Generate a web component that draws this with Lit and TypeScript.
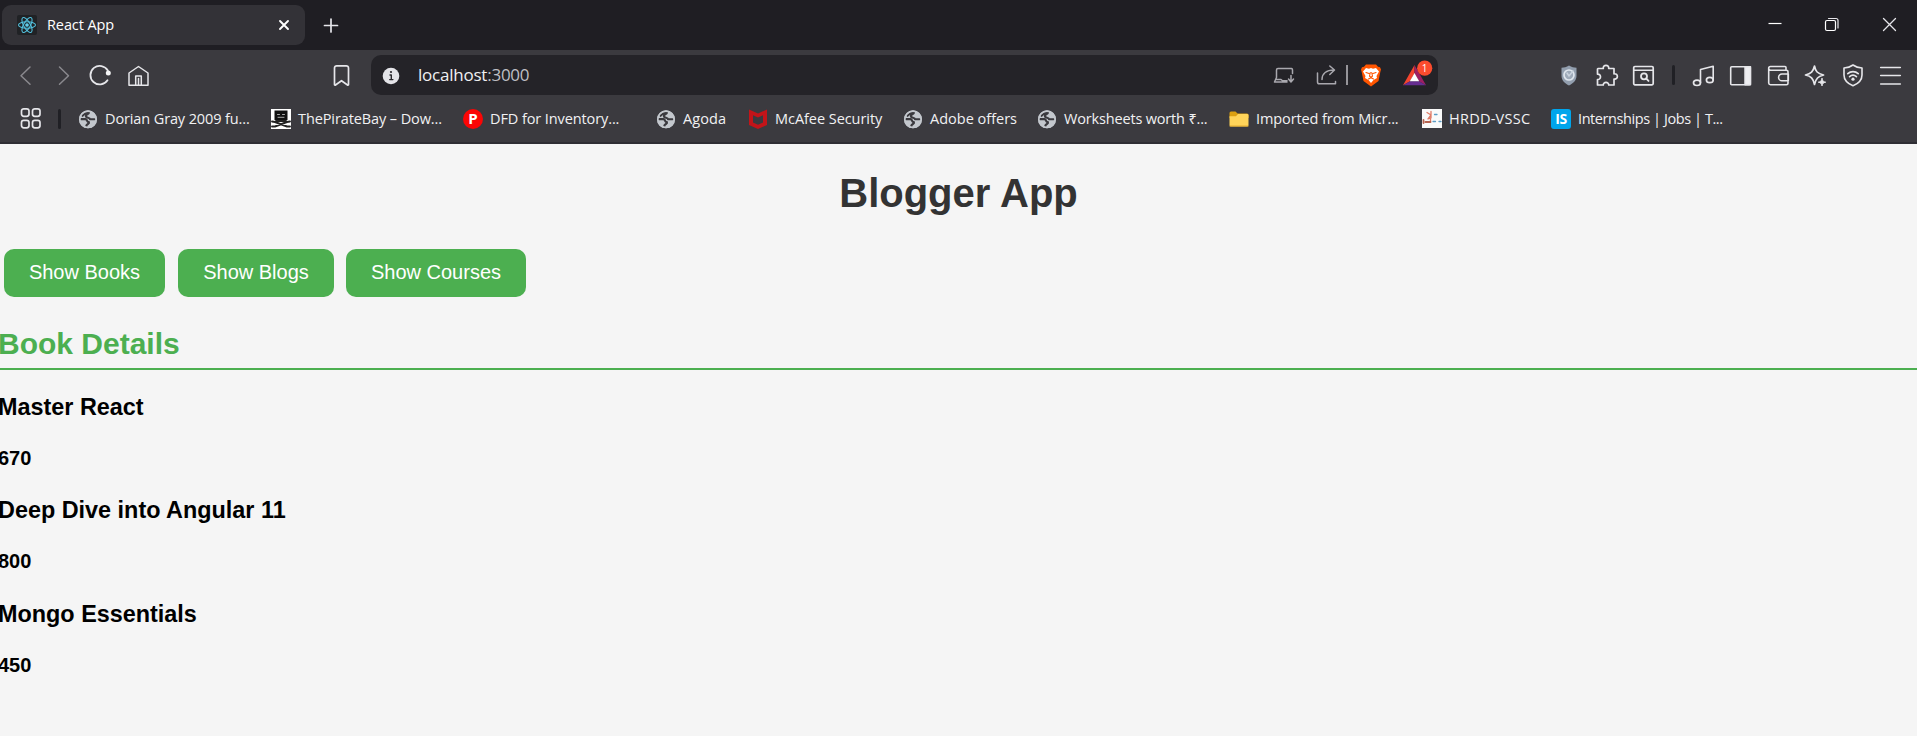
import { LitElement, html, css, svg } from "lit";
import { customElement, state } from "lit/decorators.js";

const icon = (body: unknown, size = 24) =>
  html`<svg class="icon" width=${size} height=${size} viewBox="0 0 ${size} ${size}">${body}</svg>`;

const globe = svg`
  <circle cx="10" cy="10.3" r="9" fill="#c3c7cd"/>
  <path d="M4.500 6.800C6.500 4.500 9 3.200 11 3.600c0 2-3.200 1.400-3.200 3.400 0 2.300 4.200 1 4.200 3.300h4.500" fill="none" stroke="#3b3a3f" stroke-width="2.100"/>
  <path d="M2 10.200h5.500c2 0 1 2.900 3.400 2.900 .8 2.300-2.400 1.300-2.600 4" fill="none" stroke="#3b3a3f" stroke-width="2.200"/>
  <circle cx="10" cy="10.3" r="8.200" fill="none" stroke="#c3c7cd" stroke-width="1.700"/>`;

const pirate = svg`
  <rect width="20" height="20" fill="#fff"/>
  <path d="M3.500 1.500h13v9.500h-13z" fill="#111"/>
  <path d="M6.500 5.500h2M11.500 5.500h2M7 8.300h6" stroke="#aaa" stroke-width="1"/>
  <path d="M1 12.500l3 .5 12 4.500h3M19 12.500l-3 .5L4 17.500H1M5 12h10" fill="none" stroke="#222" stroke-width="1.900"/>`;

const letterP = svg`
  <circle cx="10" cy="10" r="10" fill="#fb0505"/>
  <text x="10" y="15" text-anchor="middle" class="glyph-p">P</text>`;

const mcafee = svg`
  <path d="M1 0.500l9 4 9-4v15.500l-9 4-9-4z" fill="#c31419"/>
  <path d="M5 6.300l5 2.200 5-2.200v7.200l-5 2.300-5-2.300z" fill="#3b3a3f"/>`;

const folder = svg`
  <path d="M.5 4a1.500 1.500 0 0 1 1.500-1.500h4.500l2 2H18a1.500 1.500 0 0 1 1.500 1.500v3H.5z" fill="#dca011"/>
  <path d="M.5 7.200h6.500l2-2.200h9.200A1.300 1.300 0 0 1 19.500 6.300v9.700a1.500 1.500 0 0 1-1.500 1.500H2a1.500 1.500 0 0 1-1.500-1.500z" fill="#ffd45a"/>
  <path d="M1 17h18" stroke="#e6ad2d" stroke-width="1"/>`;

const hrdd = svg`
  <rect width="20" height="19" fill="#fafafa"/>
  <path d="M5 3.500l4 2.500-3 4 3-1V2.500M8.500 9v4" fill="none" stroke="#e07a66" stroke-width="1.300"/>
  <path d="M1.500 11v3M3.500 13h5" stroke="#b5624f" stroke-width="1.800"/>
  <path d="M12.500 5.500h2.500M11 12.500h2.500M17 12.500h2" stroke="#5c9cc5" stroke-width="1.300"/>`;

const internshala = svg`
  <rect width="20" height="20" rx="3" fill="#00a5ec"/>
  <text x="10" y="15.300" text-anchor="middle" class="glyph-is">IS</text>`;

interface Bookmark { name: string; cls: string; art: unknown }

const bookmarks: Bookmark[] = [
  { name: "Dorian Gray 2009 fu...", cls: "b1", art: globe },
  { name: "ThePirateBay – Dow...", cls: "b2", art: pirate },
  { name: "DFD for Inventory...", cls: "b3", art: letterP },
  { name: "Agoda", cls: "b4", art: globe },
  { name: "McAfee Security", cls: "b5", art: mcafee },
  { name: "Adobe offers", cls: "b6", art: globe },
  { name: "Worksheets worth ₹...", cls: "b7", art: globe },
  { name: "Imported from Micr...", cls: "b8", art: folder },
  { name: "HRDD-VSSC", cls: "b9", art: hrdd },
  { name: "Internships | Jobs | T...", cls: "b10", art: internshala },
];

@customElement("browser-chrome")
export class BrowserChrome extends LitElement {
  static styles = css`
    :host { display: block; height: 144px; box-sizing: border-box; background: #3b3a3f; border-bottom: 2px solid #2f2e34;
      font-family: "Open Sans", "Noto Sans", sans-serif; color: #f1f1f3; overflow: hidden; }
    .icon { display: block; flex: none; fill: none; stroke: #e6e6ea; stroke-width: 1.5; stroke-linecap: round; stroke-linejoin: round; overflow: visible; }
    .tabs { height: 50px; box-sizing: border-box; background: #1f1e23; display: flex; align-items: flex-start; padding: 5px 0 0 2px; }
    .tab { width: 303px; height: 40px; box-sizing: border-box; border-radius: 9px; background: #333237; display: flex; align-items: center; padding: 0 9px 0 15px; }
    .tab-name { flex: 1; padding-left: 10px; font-size: 14.5px; line-height: 20px; letter-spacing: -0.1px; color: #fff; }
    .new { margin: 8px 0 0 14px; }
    .win { margin: 7px 16px 0 auto; display: flex; gap: 33px; }
    .toolbar { height: 45px; padding: 5px 0 0 13px; box-sizing: border-box; display: grid; align-items: center;
      grid-template-columns: 38px 37px 38px 203px 42px 1067px 119px 38px 36px 41px 19px 37px 38px 37px 38px 37px 24px; }
    .toolbar > .icon { margin-top: 2px; }
    .dim { stroke: #8a898e; }
    .url { height: 40px; box-sizing: border-box; border-radius: 10px; background: #242328; display: grid; align-items: center; padding: 2px 0 0 8px;
      grid-template-columns: 39px 854px 43px 31px 13px 43px 32px; }
    .address { font-size: 17px; line-height: 24px; letter-spacing: -0.23px; margin-top: -2px; color: #f0f0f2; }
    .port { color: #bfbfc4; }
    .bar { width: 1.5px; height: 20px; background: #96959a; margin-top: -2px; }
    .sep { width: 3px; height: 20px; border-radius: 2px; background: #202025; }
    .marks { height: 47px; display: flex; align-items: center; padding-left: 19px; }
    .marks .sep { flex: none; margin: 0 17px 0 15px; }
    .mark { display: flex; align-items: center; gap: 7px; flex: none; white-space: nowrap; font-size: 14.5px; line-height: 20px; }
    .mark .icon { stroke: none; }
    .glyph-p { font: bold 15px "Open Sans", sans-serif; fill: #fff; }
    .glyph-is { font: bold 14px "Open Sans", sans-serif; fill: #fff; }
    .glyph-n { font: 10px "Open Sans", sans-serif; fill: #fff; }
    .b1 { width: 193px; letter-spacing: -0.12px; }
    .b2 { width: 192px; letter-spacing: -0.1px; }
    .b3 { width: 193px; letter-spacing: -0.1px; }
    .b4 { width: 92px; letter-spacing: 0.1px; }
    .b5 { width: 155px; letter-spacing: -0.05px; }
    .b6 { width: 134px; letter-spacing: 0; }
    .b7 { width: 192px; letter-spacing: -0.17px; }
    .b8 { width: 193px; letter-spacing: -0.1px; }
    .b9 { width: 129px; letter-spacing: 0.25px; }
    .b10 { width: 190px; letter-spacing: -0.42px; }
  `;

  render() {
    return html`
      <div class="tabs">
        <div class="tab">
          ${icon(svg`<g stroke="#53c1de" stroke-width="1.100"><rect width="20" height="20" rx="2" fill="#202225" stroke="none"/>
            <ellipse cx="10" cy="10" rx="8.500" ry="3.300"/><ellipse cx="10" cy="10" rx="8.500" ry="3.300" transform="rotate(60 10 10)"/>
            <ellipse cx="10" cy="10" rx="8.500" ry="3.300" transform="rotate(120 10 10)"/><circle cx="10" cy="10" r="1.300" fill="#7be0f7"/></g>`, 20)}
          <span class="tab-name">React App</span>
          ${icon(svg`<path d="M8 8l8 8M16 8l-8 8" stroke="#fff" stroke-width="1.900"/>`)}
        </div>
        <div class="new">${icon(svg`<path d="M12 6v13M5.500 12.500h13" stroke-width="1.700"/>`)}</div>
        <div class="win">
          ${icon(svg`<path d="M5.500 11.500h13" stroke="#fff" stroke-width="1.200" stroke-linecap="butt"/>`)}
          ${icon(svg`<rect x="5.500" y="8.500" width="10" height="10" rx="1.500" stroke="#fff" stroke-width="1.200"/><path d="M8.500 6.500h7.500a2 2 0 0 1 2 2v7.500" stroke-width="1.200"/>`)}
          ${icon(svg`<path d="M6.500 6.500l12 12M18.500 6.500l-12 12" stroke-width="1.300"/>`)}
        </div>
      </div>
      <div class="toolbar">
        ${icon(svg`<path class="dim" d="M17 3L8 11.700 17 20.300"/>`)}
        ${icon(svg`<path class="dim" d="M8.500 3l9 8.700-9 8.600"/>`)}
        ${icon(svg`<path d="M19.800 6.500A9.300 9.300 0 1 0 19.500 16.300" stroke-width="1.800"/><circle cx="20.300" cy="9" r="2.500" fill="#f4f4f6" stroke="none"/>`)}
        ${icon(svg`<path d="M3 21.300V9L12.500 2.500 22 9v12.300zM9.700 21V12h5.600v9M12.500 14.500V21"/>`)}
        ${icon(svg`<path d="M5.500 20.500V4a2.200 2.200 0 0 1 2.200-2.200h9.600A2.200 2.200 0 0 1 19.500 4v16.500a.6.6 0 0 1-1 .5l-6-4.300-6 4.300a.6.6 0 0 1-1-.5z" stroke-width="1.700"/>`)}
        <div class="url">
          ${icon(svg`<circle cx="12" cy="12" r="8.300" fill="#e4e4e9" stroke="none"/><path d="M12.300 11v4.500M11 11h1.300M10.700 15.600h3.200" stroke="#29282d" stroke-width="1.400"/><circle cx="12" cy="8" r="1.100" fill="#29282d" stroke="none"/>`)}
          <span class="address">localhost<span class="port">:3000</span></span>
          ${icon(svg`<g stroke="#a9a8ae"><path d="M4.500 13.500V6A1.500 1.500 0 0 1 6 4.500h13.500A1.500 1.500 0 0 1 20.500 6v3.500M4.500 13.500L2.500 18H15M4 15.500h5l1.500 1.300H15M19 11.500v6M16.500 15l2.500 3 2.500-3"/></g>`)}
          ${icon(svg`<g stroke="#a9a8ae"><path d="M2.500 9v9a1.800 1.800 0 0 0 1.800 1.800H20.500V17.500M7 15.500c0-6 4.500-9.500 12-9.500M14.800 2L19.500 6l-4.700 4.500"/></g>`)}
          <div class="bar"></div>
          ${icon(svg`<path d="M7 .5h10l2 2.300 2 .4 1 2.300-.7 2.500-1.800 9-7.500 5.500L4.500 17l-1.800-9L2 5.500l1-2.300 2-.4z" fill="#ff5500" stroke="none"/>
            <path d="M7 4l3 .7L12 4l2 .7L17 4l3 3.500-2.500 4.500.5 2-3.500 2-2.500 3-2.500-3L6 14l.5-2L4 7.500z" fill="#fff" stroke="none"/>
            <path d="M7 8.500l3 1M17 8.500l-3 1M11.300 8.500L10.500 12l1.500 1.500 1.500-1.500-.8-3.500M9.500 15l2.500-1.300L14.500 15" stroke="#ff5500" stroke-width="1.100"/>`)}
          ${icon(svg`<g stroke="none"><path d="M12.500 1L1 21.300l7-4 4.500-8z" fill="#f4442e"/><path d="M12.500 1L24 21.300l-7-4-4.500-8z" fill="#9e1f63"/><path d="M1 21.300h23l-7-4H8z" fill="#662d91"/>
            <path d="M12.500 9L17.200 17.300H7.800z" fill="#fff"/><circle cx="22.700" cy="4.200" r="7.600" fill="#fb4b2d"/><text x="22.700" y="7.900" text-anchor="middle" class="glyph-n">1</text></g>`)}
        </div>
        <span></span>
        ${icon(svg`<path d="M12 1.500c2.500 1.800 5 2.200 7.500 2.200v8.300c0 4.500-3.500 7.500-7.500 9.500-4-2-7.500-5-7.500-9.500V3.700c2.500 0 5-.4 7.500-2.200z" fill="#929eae" stroke="none"/><circle cx="12" cy="11" r="5" fill="#9eaab9" stroke="#dfe6ee" stroke-width="1.700"/><path d="M10 9l2 3 4-5" stroke="#c9d2dd"/>`)}
        ${icon(svg`<path d="M3 4.500h5.300C7.500 .3 14.500 .3 13.700 4.500H19v5.300c4.500-.8 4.500 6 0 5.200v6H13.700c.3-3.500-5.700-3.500-5.400 0H2.500v-5.500c4 .3 4-5.700 0-5.400V5z" stroke-width="1.700"/>`)}
        ${icon(svg`<rect x="2.700" y="2.500" width="19.500" height="18.300" rx="1.200" stroke-width="1.700"/><path d="M3 6.300h19"/><circle cx="13" cy="12.300" r="3" stroke-width="1.800"/><path d="M15.300 14.700l2.200 2.200" stroke-width="1.900"/>`)}
        <div class="sep"></div>
        ${icon(svg`<path d="M9.500 18.500V5.500l12.700-3.200V16" stroke-width="1.600"/><ellipse cx="6" cy="18.800" rx="3.500" ry="2.700" stroke-width="1.700"/><ellipse cx="18.800" cy="16" rx="3.400" ry="2.700" stroke-width="1.700"/>`)}
        ${icon(svg`<rect x="2.700" y="2.700" width="19.600" height="18" rx="1" stroke-width="1.600"/><path d="M17 2.700h5.500v18H17z" fill="#eeeef1"/>`)}
        ${icon(svg`<path d="M20 6V3.500a1 1 0 0 0-1-1H4.500a1.800 1.800 0 0 0 0 3.700H20.500a1.500 1.500 0 0 1 1.500 1.500v11.500a1.500 1.500 0 0 1-1.500 1.500H4.500A1.800 1.800 0 0 1 2.700 19V4.500M22.300 10H16a3.300 3.300 0 0 0 0 6.800h6.300z" stroke-width="1.600"/>`)}
        ${icon(svg`<path d="M11.500 2c1 5.500 3 7.500 9 9-2.500.8-4.500 1.500-6 3-1.500 1.500-2.300 3.500-3 6.500-1.300-6-3.500-8.300-9-9.500 5.500-1.300 7.700-3.500 9-9z" stroke-width="1.700"/><path d="M19 14.500c.4 2.500 1.300 3.300 3.700 3.700-2.400.4-3.300 1.300-3.700 3.700-.4-2.400-1.300-3.300-3.700-3.700 2.400-.4 3.300-1.200 3.700-3.700z" fill="#e6e6ea" stroke-width="1"/>`)}
        ${icon(svg`<path d="M12 1c2.700 2 5.700 2.800 9 3v7c0 5-3.500 8.500-9 10.800C6.500 19.500 3 16 3 11V4c3.300-.2 6.300-1 9-3z" stroke-width="1.600"/><path d="M6.800 9.700c3-2.700 7.400-2.700 10.400 0M8.600 12.600c2-1.800 4.800-1.800 6.800 0" stroke-width="1.700"/><circle cx="12" cy="15.200" r="1.600" fill="#e6e6ea" stroke="none"/>`)}
        ${icon(svg`<path d="M2.700 3.500h19.600M2.700 11.500h19.600M2.700 20h19.600" stroke-width="1.600"/>`)}
      </div>
      <div class="marks">
        ${icon(svg`<g stroke-width="1.700"><rect x="2.500" y="1.800" width="7.500" height="7.500" rx="2.300"/><rect x="13.500" y="1.800" width="7.500" height="7.500" rx="2.300"/><rect x="2.500" y="13.300" width="7.500" height="7.500" rx="2.300"/><rect x="13.500" y="13.300" width="7.500" height="7.500" rx="2.300"/></g>`)}
        <div class="sep"></div>
        ${bookmarks.map((b) => html`<div class="mark ${b.cls}">${icon(b.art, 20)}<span>${b.name}</span></div>`)}
      </div>`;
  }
}

@customElement("app-root")
export class AppRoot extends LitElement {
  static styles = css`
    :host { display: block; height: 736px; overflow: hidden; background: #f5f5f5; font-family: "Liberation Sans", Arial, sans-serif; color: #000; }
    .page { margin-left: -2px; }
    .page::before { content: ""; display: table; }
    h1 { margin: 26px 0 0 2px; text-align: center; font-size: 40px; line-height: 46px; color: #333; }
    .actions { display: flex; gap: 13px; padding: 33px 0 0 6px; }
    button { height: 48px; padding: 0 0 2px; border: 0; border-radius: 10px; background: #4caf50; color: #fff; font: 20px "Liberation Sans", Arial, sans-serif; }
    .books { width: 161px; }
    .blogs { width: 156px; }
    .courses { width: 180px; margin-left: -1px; }
    h2 { margin: 30px 0 0; padding-bottom: 7px; border-bottom: 2px solid #4caf50; font-size: 30px; line-height: 34px; color: #4caf50; }
    h3 { margin: 0; font-size: 23.4px; line-height: 27px; }
    h4 { margin: 26px 0 27.4px; font-size: 20px; line-height: 23px; }
    .list { padding-top: 24px; }
  `;

  @state() private books = [
    { name: "Master React", price: 670 },
    { name: "Deep Dive into Angular 11", price: 800 },
    { name: "Mongo Essentials", price: 450 },
  ];

  render() {
    return html`
      <browser-chrome></browser-chrome>
      <main class="page">
        <h1>Blogger App</h1>
        <div class="actions">
          <button class="books">Show Books</button>
          <button class="blogs">Show Blogs</button>
          <button class="courses">Show Courses</button>
        </div>
        <h2>Book Details</h2>
        <div class="list">
          ${this.books.map((b) => html`<div class="book"><h3>${b.name}</h3><h4>${b.price}</h4></div>`)}
        </div>
      </main>`;
  }
}
